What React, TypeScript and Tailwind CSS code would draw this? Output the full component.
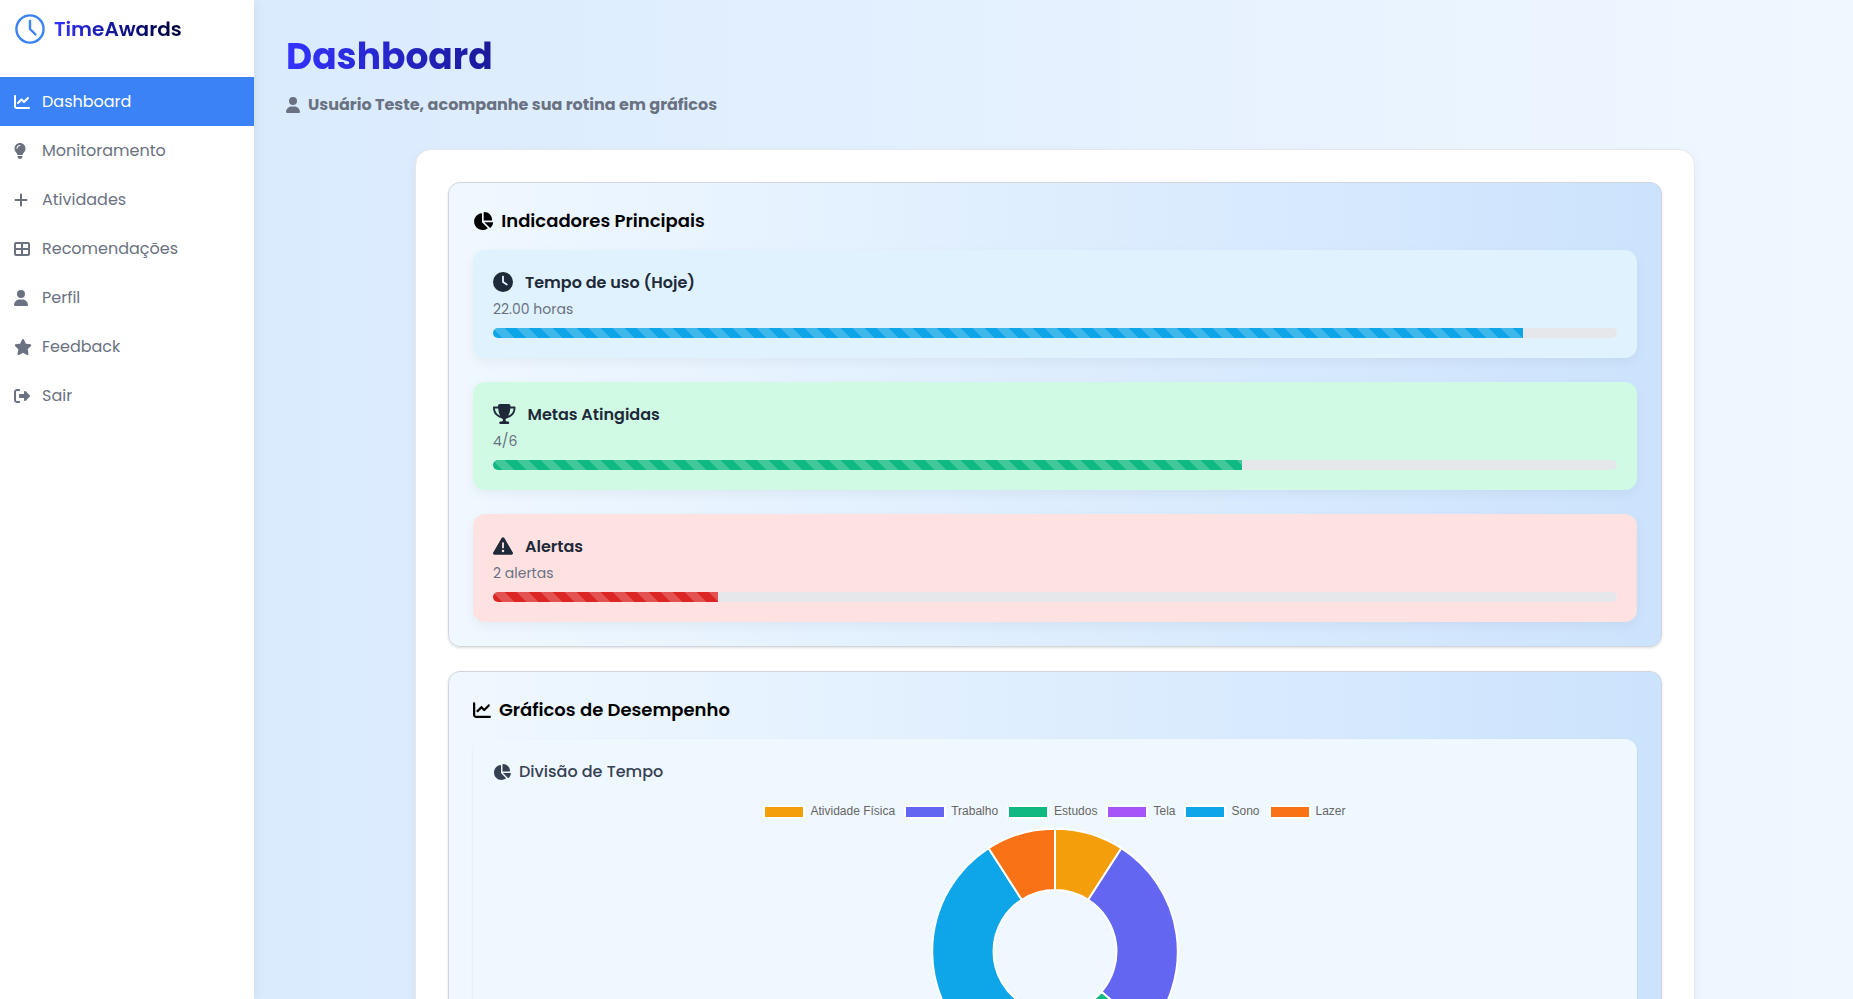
import {
  FaChartLine, FaLightbulb, FaPlus, FaTableCellsLarge, FaUser, FaStar,
  FaRightFromBracket, FaChartPie, FaClock, FaTrophy, FaTriangleExclamation,
} from 'react-icons/fa6';
import type { IconType } from 'react-icons';
import type { ReactNode } from 'react';

type NavItem = { label: string; icon: IconType; size: string; active?: boolean };

const NAV: NavItem[] = [
  { label: 'Dashboard', icon: FaChartLine, size: 'w-4', active: true },
  { label: 'Monitoramento', icon: FaLightbulb, size: 'w-3' },
  { label: 'Atividades', icon: FaPlus, size: 'w-[14px]' },
  { label: 'Recomendações', icon: FaTableCellsLarge, size: 'w-4' },
  { label: 'Perfil', icon: FaUser, size: 'w-[14px]' },
  { label: 'Feedback', icon: FaStar, size: 'w-[18px]' },
  { label: 'Sair', icon: FaRightFromBracket, size: 'w-4' },
];

const STRIPES =
  'bg-[linear-gradient(45deg,rgba(255,255,255,0.2)_25%,transparent_25%,transparent_50%,rgba(255,255,255,0.2)_50%,rgba(255,255,255,0.2)_75%,transparent_75%,transparent)] bg-[length:24px_24px]';

type Indicator = {
  title: string; detail: string; icon: IconType; size: string; percent: number;
  card: string; bar: string;
};

const INDICATORS: Indicator[] = [
  { title: 'Tempo de uso (Hoje)', detail: '22.00 horas', icon: FaClock, size: 'w-5', percent: 2200 / 24, card: 'bg-[#e0f2fe]', bar: 'bg-[#0ea5e9]' },
  { title: 'Metas Atingidas', detail: '4/6', icon: FaTrophy, size: 'w-[22.5px]', percent: 400 / 6, card: 'bg-[#d1fae5]', bar: 'bg-[#10b981]' },
  { title: 'Alertas', detail: '2 alertas', icon: FaTriangleExclamation, size: 'w-5', percent: 20, card: 'bg-[#fee2e2]', bar: 'bg-[#dc2626]' },
];

const SLICES = [
  { label: 'Atividade Física', value: 2, color: '#f59e0b' },
  { label: 'Trabalho', value: 6, color: '#6366f1' },
  { label: 'Estudos', value: 3, color: '#10b981' },
  { label: 'Tela', value: 2, color: '#a855f7' },
  { label: 'Sono', value: 7, color: '#0ea5e9' },
  { label: 'Lazer', value: 2, color: '#f97316' },
];

function Doughnut() {
  const total = SLICES.reduce((sum, s) => sum + s.value, 0);
  const cx = 124;
  const cy = 123.5;
  const outer = 122.8;
  const inner = 61.5;
  let angle = 0;
  const at = (r: number, a: number) => `${cx + r * Math.sin(a)} ${cy - r * Math.cos(a)}`;
  return (
    <svg width="248" height="248" viewBox="0 0 248 248" className="block overflow-visible">
      {SLICES.map((s) => {
        const a0 = angle;
        const a1 = angle + (s.value / total) * Math.PI * 2;
        angle = a1;
        const large = a1 - a0 > Math.PI ? 1 : 0;
        return (
          <path
            key={s.label}
            d={`M${at(outer, a0)}A${outer} ${outer} 0 ${large} 1 ${at(outer, a1)}L${at(inner, a1)}A${inner} ${inner} 0 ${large} 0 ${at(inner, a0)}Z`}
            fill={s.color}
            stroke="#fff"
            strokeWidth="2"
            strokeLinejoin="bevel"
          />
        );
      })}
    </svg>
  );
}

function Section({ children }: { children: ReactNode }) {
  return (
    <section className="rounded-xl border border-gray-300 bg-linear-to-r from-[#f0f8ff] to-[#cce3fd] p-6 shadow-sm">
      {children}
    </section>
  );
}

export default function App() {
  return (
    <div className="flex h-[999px] overflow-hidden bg-[#eff6ff] font-['Poppins','Inter',sans-serif]">
      <aside className="z-10 w-[254px] shrink-0 bg-white shadow-[2px_0_10px_rgba(0,0,0,0.06)]">
        <div className="flex h-[77px] items-start pt-[14px] pl-[15px]">
          <svg width="30" height="30" viewBox="0 0 30 30" fill="none" stroke="#3b82f6" strokeWidth="2.4" strokeLinecap="round" strokeLinejoin="round">
            <circle cx="15" cy="15" r="13.6" />
            <path d="M15 7v8l5.5 5.5" />
          </svg>
          <span className="ml-[9px] bg-linear-to-r from-[#3333ff] to-[#000033] bg-clip-text text-xl leading-[30px] font-semibold text-transparent">TimeAwards</span>
        </div>
        <nav>
          {NAV.map(({ label, icon: Icon, size, active }) => (
            <a key={label} className={`flex h-[49px] items-center pl-[14px] ${active ? 'bg-[#3b82f6] text-white' : 'text-gray-500'}`}>
              <span className="flex w-7 shrink-0"><Icon className={`h-4 ${size}`} /></span>
              <span>{label}</span>
            </a>
          ))}
        </nav>
      </aside>
      <main className="flex-1 bg-linear-to-r from-[#daebfe] to-[#f0f7ff] pt-[33px] pr-[29px] pl-8">
        <h1 className="w-fit bg-linear-to-r from-[#3333ff] to-[#1a1a99] bg-clip-text text-4xl leading-[48px] font-bold text-transparent">Dashboard</h1>
        <p className="mt-[12px] flex h-6 items-center gap-2 font-bold text-gray-500">
          <FaUser className="h-4 w-[14px]" />
          <span>Usuário Teste, acompanhe sua rotina em gráficos</span>
        </p>
        <div className="mx-auto mt-[32px] flex w-[1280px] flex-col gap-6 rounded-2xl border border-gray-200 bg-white p-8 shadow-[0_4px_12px_rgba(0,0,0,0.05)]">
          <Section>
            <h2 className="mb-4 flex h-[27px] items-center gap-2 text-lg font-semibold text-black">
              <FaChartPie className="h-[18px] w-[20.25px]" />
              <span>Indicadores Principais</span>
            </h2>
            <div className="flex flex-col gap-6">
              {INDICATORS.map(({ icon: Icon, ...it }) => (
                <article key={it.title} className={`h-[108px] rounded-xl p-5 shadow-[0_4px_12px_rgba(0,0,0,0.05)] ${it.card}`}>
                  <h3 className="flex h-6 items-start gap-3 font-semibold text-gray-800">
                    <Icon className={`mt-0.5 h-5 ${it.size}`} />
                    <span className="mt-px">{it.title}</span>
                  </h3>
                  <p className="mt-[5px] text-sm text-gray-500">{it.detail}</p>
                  <div className="mt-[9px] h-[10px] overflow-hidden rounded-full bg-gray-200">
                    <div className={`h-full ${STRIPES} ${it.bar}`} style={{ width: `${it.percent}%` }} />
                  </div>
                </article>
              ))}
            </div>
          </Section>
          <Section>
            <h2 className="mb-4 flex h-[27px] items-center gap-2 text-lg font-semibold text-black">
              <FaChartLine className="h-[18px] w-[18px]" />
              <span>Gráficos de Desempenho</span>
            </h2>
            <article className="rounded-xl bg-[#f0f8ff] p-5 shadow-[0_1px_3px_rgba(0,0,0,0.08)]">
              <h3 className="mt-px flex h-6 items-center gap-2 font-medium text-gray-700">
                <FaChartPie className="h-4 w-[18px]" />
                <span>Divisão de Tempo</span>
              </h3>
              <div className="mt-[20px] flex justify-center gap-[10px] font-['Liberation_Sans',Arial,sans-serif] text-xs leading-[14px] text-[#666]">
                {SLICES.map((s) => (
                  <span key={s.label} className="flex items-center gap-[6px]">
                    <svg width="40" height="14" className="block overflow-visible"><rect x="0" y="2" width="40" height="12" fill={s.color} stroke="#fff" strokeWidth="2" /></svg>
                    {s.label}
                  </span>
                ))}
              </div>
              <div className="mt-[10px] flex h-[400px] justify-center">
                <Doughnut />
              </div>
            </article>
          </Section>
        </div>
      </main>
    </div>
  );
}
